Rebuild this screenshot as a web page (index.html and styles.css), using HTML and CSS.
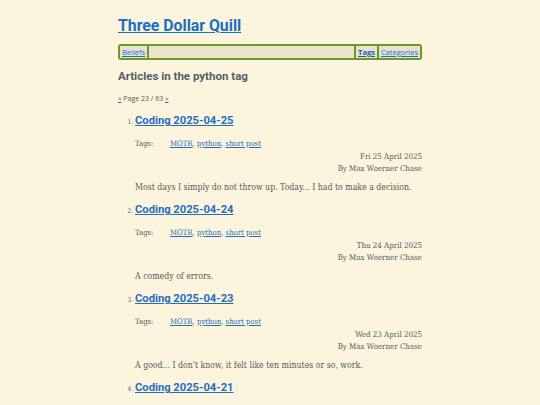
FILE: index.html
```html
<!DOCTYPE html>
<html>
<head>
<meta charset="utf-8">
<link rel="stylesheet" href="styles.css">
</head>
<body>
<div class="page">
  <header class="site-header">
    <h1 class="site-title"><a href="#">Three Dollar Quill</a></h1>
    <nav class="menu">
      <a class="menu-item" href="#">Beliefs</a>
      <span class="menu-spacer"></span>
      <a class="menu-item menu-current" href="#">Tags</a>
      <a class="menu-item" href="#">Categories</a>
    </nav>
  </header>
  <h2 class="page-title">Articles in the python tag</h2>
  <p class="pager"><a href="#">«</a> Page 23 / 63 <a href="#">»</a></p>
  <ol class="articles">
    <li class="article">
      <h3 class="article-title"><a href="#">Coding 2025-04-25</a></h3>
      <div class="tags"><span class="tags-label">Tags:</span><span><a href="#">MOTR</a>, <a href="#">python</a>, <a href="#">short post</a></span></div>
      <div class="meta"><div>Fri 25 April 2025</div><div>By Max Woerner Chase</div></div>
      <p class="summary">Most days I simply do not throw up. Today... I had to make a decision.</p>
    </li>
    <li class="article">
      <h3 class="article-title"><a href="#">Coding 2025-04-24</a></h3>
      <div class="tags"><span class="tags-label">Tags:</span><span><a href="#">MOTR</a>, <a href="#">python</a>, <a href="#">short post</a></span></div>
      <div class="meta"><div>Thu 24 April 2025</div><div>By Max Woerner Chase</div></div>
      <p class="summary">A comedy of errors.</p>
    </li>
    <li class="article">
      <h3 class="article-title"><a href="#">Coding 2025-04-23</a></h3>
      <div class="tags"><span class="tags-label">Tags:</span><span><a href="#">MOTR</a>, <a href="#">python</a>, <a href="#">short post</a></span></div>
      <div class="meta"><div>Wed 23 April 2025</div><div>By Max Woerner Chase</div></div>
      <p class="summary">A good... I don't know, it felt like ten minutes or so, work.</p>
    </li>
    <li class="article">
      <h3 class="article-title"><a href="#">Coding 2025-04-21</a></h3>
    </li>
  </ol>
</div>
</body>
</html>
```

FILE: styles.css
```css
html, body {
  margin: 0;
  padding: 0;
  background: #fcf4dd;
}
body {
  font-family: "DejaVu Serif Condensed", "DejaVu Serif", serif;
  font-stretch: condensed;
  color: #555a5f;
  font-size: 8px;
  overflow: hidden;
}
a {
  color: #1f6fc0;
}
.page {
  width: 304px;
  margin: 0 auto;
}
.site-title {
  font-family: Roboto, "Open Sans", sans-serif;
  font-stretch: normal;
  font-weight: 700;
  font-size: 15.8px;
  line-height: 20px;
  margin: 16px 0 8px 0;
}
.site-title a {
  color: #1a6fc4;
}
.menu {
  display: flex;
  align-items: stretch;
  height: 12px;
  border: 2px solid #6d9a23;
  border-radius: 3px;
  background: #ece4cf;
  font-family: "Open Sans", "Noto Sans", sans-serif;
  font-stretch: normal;
  font-size: 7.5px;
  line-height: 12px;
}
.menu-item {
  padding: 0 2px;
  background: #e6e3d3;
}
.menu-item:first-child {
  border-right: 2px solid #6d9a23;
}
.menu-spacer {
  flex: 1;
}
.menu-current {
  font-weight: 700;
  border-left: 2px solid #6d9a23;
  border-right: 2px solid #6d9a23;
  color: #1a5ea8;
}
.page-title {
  font-family: Roboto, "Open Sans", sans-serif;
  font-stretch: normal;
  font-weight: 700;
  font-size: 11.5px;
  line-height: 16px;
  color: #555e66;
  margin: 8px 0 0 0;
}
.pager {
  margin: 10px 0 0 0;
  font-family: "Open Sans", "Noto Sans", sans-serif;
  font-stretch: normal;
  font-size: 7px;
  line-height: 10px;
}
.articles {
  margin: 9px 0 0 0;
  padding-left: 17px;
}
.article::marker {
  font-size: 6.5px;
}
.article-title {
  font-family: Roboto, "Open Sans", sans-serif;
  font-stretch: normal;
  font-weight: 700;
  font-size: 11.2px;
  line-height: 16px;
  margin: 0;
}
.tags {
  display: flex;
  margin-top: 10px;
  line-height: 10px;
  font-size: 7.7px;
}
.tags-label {
  width: 35px;
}
.meta {
  text-align: right;
  line-height: 12px;
  margin-top: 2px;
  font-size: 7.9px;
}
.summary {
  line-height: 10px;
  font-size: 8.7px;
  margin: 7px 0 10px 0;
}
```
